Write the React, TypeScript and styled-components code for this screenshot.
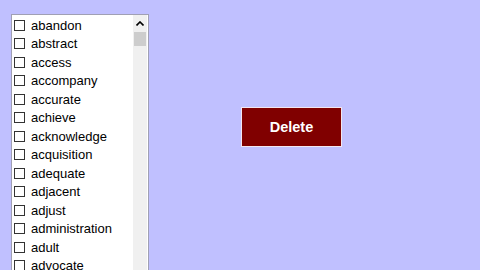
import React from "react";
import styled, { createGlobalStyle } from "styled-components";

const Global = createGlobalStyle`
  html, body { margin: 0; padding: 0; background: #c0c0ff; overflow: hidden; }
  body { width: 480px; height: 270px; }
`;

const Page = styled.div`
  display: flex;
  align-items: flex-start;
  width: 480px;
  height: 270px;
  overflow: hidden;
  padding: 14px 0 0 11px;
  box-sizing: border-box;
  background: #c0c0ff;
`;

const ListBox = styled.div`
  display: flex;
  width: 138px;
  height: 300px;
  box-sizing: border-box;
  border: 1px solid #a0a0b4;
  background: #ffffff;
  flex-shrink: 0;
`;

const Items = styled.div`
  flex: 1;
  display: flex;
  flex-direction: column;
  padding-top: 1px;
`;

const Row = styled.label`
  display: flex;
  align-items: center;
  height: 18.5px;
  padding-left: 2px;
  font-family: "Liberation Sans", Arial, sans-serif;
  font-size: 13px;
  color: #000;
  white-space: nowrap;
`;

const Box = styled.span`
  width: 11px;
  height: 11px;
  box-sizing: border-box;
  border: 1px solid #333;
  background: #fff;
  margin-right: 6px;
  flex-shrink: 0;
`;

const ScrollBar = styled.div`
  width: 14px;
  background: #f0f0f0;
  display: flex;
  flex-direction: column;
  align-items: stretch;
  margin-right: 1px;
`;

const Arrow = styled.div`
  height: 17px;
  display: flex;
  align-items: center;
  justify-content: center;
`;

const Thumb = styled.div`
  height: 14px;
  margin: 0 1px;
  background: #cdcdcd;
`;

const DeleteButton = styled.button`
  margin: 93px 0 0 92px;
  width: 101px;
  height: 40px;
  box-sizing: border-box;
  border: 1px solid #f2e6f0;
  outline: none;
  background: #800000;
  color: #fff;
  font-family: "Liberation Sans", Arial, sans-serif;
  font-weight: bold;
  font-size: 14.5px;
  padding: 0;
  cursor: pointer;
`;

const words = [
  "abandon",
  "abstract",
  "access",
  "accompany",
  "accurate",
  "achieve",
  "acknowledge",
  "acquisition",
  "adequate",
  "adjacent",
  "adjust",
  "administration",
  "adult",
  "advocate",
];

export default function App() {
  return (
    <>
      <Global />
      <Page>
        <ListBox>
          <Items>
            {words.map((w) => (
              <Row key={w}>
                <Box />
                {w}
              </Row>
            ))}
          </Items>
          <ScrollBar>
            <Arrow>
              <svg width="8" height="5" viewBox="0 0 8 5">
                <path d="M0.5 4.5 L4 1 L7.5 4.5" fill="none" stroke="#000" strokeWidth="1.6" />
              </svg>
            </Arrow>
            <Thumb />
          </ScrollBar>
        </ListBox>
        <DeleteButton>Delete</DeleteButton>
      </Page>
    </>
  );
}
